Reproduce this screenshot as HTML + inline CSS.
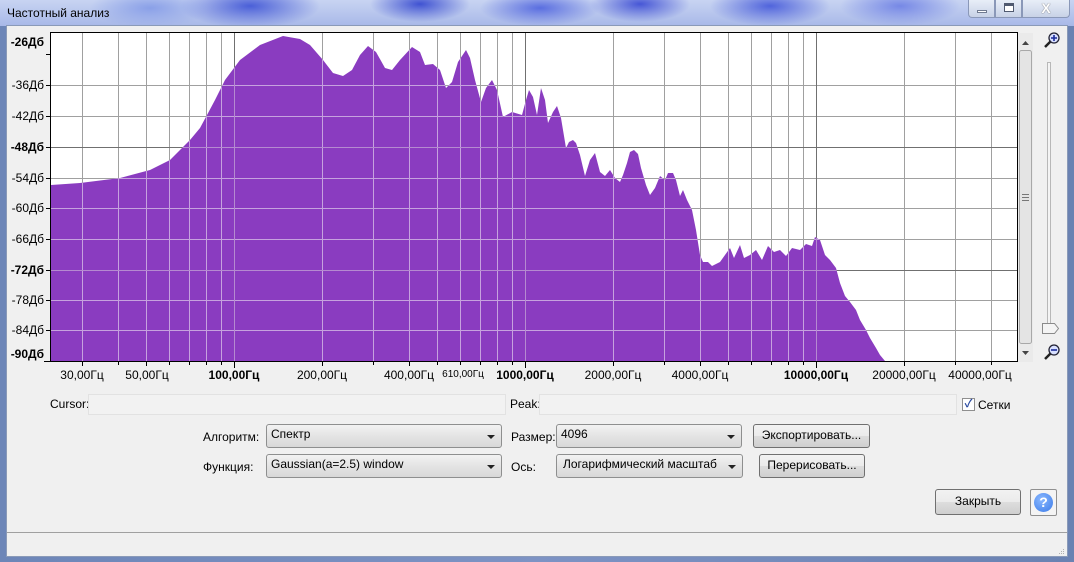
<!DOCTYPE html>
<html><head><meta charset="utf-8">
<style>
*{margin:0;padding:0;box-sizing:border-box}
body{width:1074px;height:562px;overflow:hidden;position:relative;font-family:"Liberation Sans","Noto Sans CJK SC",sans-serif;font-size:12px;color:#000;
background:linear-gradient(90deg,#6d86b8,#7d93c4 50%,#6a82b2)}
.tb{position:absolute;left:0;top:0;width:1074px;height:26px;overflow:hidden;
background:
radial-gradient(ellipse 60px 20px at 150px 8px,#8aa0e8,transparent),
radial-gradient(ellipse 70px 22px at 250px 6px,#4a5fd8,transparent),
radial-gradient(ellipse 50px 18px at 420px 4px,#3f52d2,transparent),
radial-gradient(ellipse 60px 18px at 540px 8px,#5a6ee0,transparent),
radial-gradient(ellipse 50px 18px at 640px 4px,#4656d6,transparent),
radial-gradient(ellipse 60px 20px at 770px 6px,#5064dc,transparent),
radial-gradient(ellipse 60px 20px at 900px 6px,#7688e6,transparent),
linear-gradient(180deg,#c8d4f2,#a8b8e8);}
.title{position:absolute;left:7px;top:6px;font-size:12px;color:#000}
.wb{position:absolute;top:0;height:18px;border:1px solid #8a98b8;border-top:none;background:linear-gradient(#e8eef8,#c8d2e6);}
.client{position:absolute;left:6px;top:25px;width:1062px;height:532px;background:#f0f0f0;border:1px solid #8a9ab8}
.abs{position:absolute;white-space:nowrap}
.ylab{position:absolute;right:1030px;width:50px;text-align:right;font-size:12px}
.xl{position:absolute;top:368px;font-size:12px;transform:translateX(-50%)}
.b{font-weight:bold}
.tx{position:absolute;height:21px;background:#f2f2f2;border:1px solid #e2e2e2}
.combo{position:absolute;height:24px;border:1px solid #8e8f8f;border-radius:3px;background:linear-gradient(#f2f2f2,#e4e4e4 50%,#d8d8d8);padding:2px 4px;font-size:12px}
.combo:after{content:"";position:absolute;right:6px;top:10px;border-left:4px solid transparent;border-right:4px solid transparent;border-top:4px solid #222}
.btn{position:absolute;height:24px;border:1px solid #707070;border-radius:3px;background:linear-gradient(#f2f2f2,#ebebeb 50%,#dddddd 51%,#cfcfcf);text-align:center;line-height:21px;font-size:12px}
</style></head><body>
<div class="tb"><div class="title">Частотный анализ</div>
<div class="wb" style="left:968px;width:27px;border-radius:0 0 0 4px"><div style="position:absolute;left:8px;top:10px;width:10px;height:3px;background:#fff;border:1px solid #707a90"></div></div>
<div class="wb" style="left:995px;width:27px"><div style="position:absolute;left:8px;top:3px;width:10px;height:9px;border:1px solid #505a70;border-top-width:3px;background:#fff"></div></div>
<div class="wb" style="left:1022px;width:48px;border-radius:0 0 4px 0;text-align:center;font-weight:bold;font-size:14px;color:#fff;text-shadow:0 0 1px #333;line-height:17px">X</div>
</div>
<div class="client"></div>

<svg class="abs" style="left:0;top:0" width="1074" height="562" viewBox="0 0 1074 562">
<defs>
<clipPath id="c"><polygon points="51,185 80,183 120,178 150,170 170,160 190,140 200,128 207,115 215,100 225,80 240,60 260,45 283,36 300,39 310,45 323,60 333,73 343,76 352,70 360,55 368,46 376,52 385,68 392,70 400,60 412,47 420,52 425,65 433,64 440,70 446,88 452,82 458,62 466,50 470,58 475,80 481,102 486,88 492,80 497,90 503,117 512,112 522,115 526,100 529,90 533,97 537,115 541,88 545,100 548,123 553,112 557,106 561,118 566,148 569,142 573,140 576,143 580,155 585,176 590,160 595,153 600,172 605,176 610,170 615,178 620,182 623,175 627,163 630,152 634,150 638,154 641,168 646,185 650,195 655,188 660,176 665,180 668,173 673,173 676,180 680,196 683,190 687,200 692,210 696,230 700,255 703,262 708,262 712,266 720,262 730,248 734,258 740,245 744,258 750,255 756,250 762,260 768,246 774,252 780,250 786,256 792,248 800,250 806,244 812,246 815,237 820,240 825,255 830,260 836,268 840,283 845,296 850,302 856,310 860,320 866,330 870,338 876,348 880,355 885,361 51,361"/></clipPath>
<g id="gl">
<path d="M82.5 33V361M118.5 33V361M146.5 33V361M169.5 33V361M189.5 33V361M206.5 33V361M221.5 33V361M322.5 33V361M373.5 33V361M409.5 33V361M437.5 33V361M460.5 33V361M480.5 33V361M497.5 33V361M512.5 33V361M613.5 33V361M664.5 33V361M700.5 33V361M728.5 33V361M751.5 33V361M771.5 33V361M788.5 33V361M803.5 33V361M904.5 33V361M955.5 33V361M991.5 33V361M51 85.5H1017M51 116.5H1017M51 178.5H1017M51 208.5H1017M51 239.5H1017M51 300.5H1017M51 330.5H1017"/>
</g>
<g id="gd">
<path d="M234.5 33V361M525.5 33V361M816.5 33V361M51 147.5H1017M51 270.5H1017"/>
</g>
</defs>
<rect x="51" y="33" width="966" height="328" fill="#fff"/>
<use href="#gl" stroke="#a0a0a0" fill="none"/>
<use href="#gd" stroke="#707070" fill="none"/>
<rect x="51" y="33" width="966" height="328" fill="#8a3cc0" clip-path="url(#c)"/>
<g clip-path="url(#c)" fill="none">
<use href="#gl" stroke="#c6a2de"/>
<use href="#gd" stroke="#b58ad0"/>
</g>
<rect x="50.5" y="32.5" width="967" height="329" fill="none" stroke="#000"/>
<g stroke="#000">
<path d="M46 54.5h4M46 85.5h4M46 116.5h4M46 147.5h4M46 178.5h4M46 208.5h4M46 239.5h4M46 270.5h4M46 300.5h4M46 330.5h4M44 361.5h6"/>
<path d="M82.5 362v4M118.5 362v3M146.5 362v4M169.5 362v3M189.5 362v3M206.5 362v3M221.5 362v3M234.5 362v6M322.5 362v4M373.5 362v3M409.5 362v4M437.5 362v3M460.5 362v3M480.5 362v3M497.5 362v3M512.5 362v3M525.5 362v6M613.5 362v4M664.5 362v3M700.5 362v4M728.5 362v3M751.5 362v3M771.5 362v3M788.5 362v3M803.5 362v3M816.5 362v6M904.5 362v4M955.5 362v3M991.5 362v3"/>
</g>
<rect x="1018" y="33" width="15" height="329" fill="#eaeaea"/>
<polygon points="1022,45 1029,45 1025.5,41" fill="#444"/>
<polygon points="1022,351 1029,351 1025.5,355" fill="#444"/>
<rect x="1019.5" y="50.5" width="12" height="293" rx="2" fill="#e4e4e4" stroke="#a8a8a8"/>
<g stroke="#777"><line x1="1022" y1="194.5" x2="1029" y2="194.5"/><line x1="1022" y1="197.5" x2="1029" y2="197.5"/><line x1="1022" y1="200.5" x2="1029" y2="200.5"/></g>
<rect x="1047.5" y="62.5" width="3" height="264" fill="#f4f4f4" stroke="#b8b8b8"/>
<path d="M1042.5 323.5h12l4 5-4 5h-12z" fill="#f4f4f4" stroke="#8a8a8a"/>
<g>
<line x1="1045" y1="47" x2="1051" y2="41" stroke="#222" stroke-width="2.5"/>
<circle cx="1054" cy="38" r="5" fill="#d8e0ff" stroke="#223" stroke-width="1.3"/>
<path d="M1051 38h6M1054 35v6" stroke="#1a2a9a" stroke-width="1.6"/>
<line x1="1045" y1="359" x2="1051" y2="353" stroke="#222" stroke-width="2.5"/>
<circle cx="1054" cy="350" r="5" fill="#d8e0ff" stroke="#223" stroke-width="1.3"/>
<path d="M1051 350h6" stroke="#1a2a9a" stroke-width="1.6"/>
</g>
<line x1="7" y1="532.5" x2="1067" y2="532.5" stroke="#a0a0a0"/>
<g fill="#b0b0b0"><rect x="1063" y="549" width="1" height="1"/><rect x="1061" y="551" width="1" height="1"/><rect x="1063" y="551" width="1" height="1"/><rect x="1059" y="553" width="1" height="1"/><rect x="1061" y="553" width="1" height="1"/><rect x="1063" y="553" width="1" height="1"/></g>
</svg>

<div class="ylab b" style="top:35px">-26Дб</div>
<div class="ylab" style="top:78px">-36Дб</div>
<div class="ylab" style="top:109px">-42Дб</div>
<div class="ylab b" style="top:140px">-48Дб</div>
<div class="ylab" style="top:171px">-54Дб</div>
<div class="ylab" style="top:201px">-60Дб</div>
<div class="ylab" style="top:232px">-66Дб</div>
<div class="ylab b" style="top:263px">-72Дб</div>
<div class="ylab" style="top:293px">-78Дб</div>
<div class="ylab" style="top:323px">-84Дб</div>
<div class="ylab b" style="top:347px">-90Дб</div>

<div class="xl" style="left:82px">30,00Гц</div>
<div class="xl" style="left:147px">50,00Гц</div>
<div class="xl b" style="left:234px">100,00Гц</div>
<div class="xl" style="left:322px">200,00Гц</div>
<div class="xl" style="left:409px">400,00Гц</div>
<div class="xl" style="left:463px;font-size:10px;top:369px">610,00Гц</div>
<div class="xl b" style="left:525px">1000,00Гц</div>
<div class="xl" style="left:613px">2000,00Гц</div>
<div class="xl" style="left:700px">4000,00Гц</div>
<div class="xl b" style="left:816px">10000,00Гц</div>
<div class="xl" style="left:904px">20000,00Гц</div>
<div class="xl" style="left:980px">40000,00Гц</div>

<div class="abs" style="left:50px;top:397px">Cursor:</div>
<div class="tx" style="left:88px;top:394px;width:418px"></div>
<div class="abs" style="left:510px;top:397px">Peak:</div>
<div class="tx" style="left:539px;top:394px;width:418px"></div>
<div class="abs" style="left:962px;top:398px;width:13px;height:13px;border:1px solid #8f8f8f;background:#fff;color:#2a4aa0;font-size:11px;line-height:11px;text-align:center;font-weight:bold">✓</div>
<div class="abs" style="left:978px;top:398px">Сетки</div>

<div class="abs" style="left:203px;top:430px">Алгоритм:</div>
<div class="combo" style="left:266px;top:424px;width:236px">Спектр</div>
<div class="abs" style="left:203px;top:460px">Функция:</div>
<div class="combo" style="left:266px;top:454px;width:236px">Gaussian(a=2.5) window</div>
<div class="abs" style="left:511px;top:430px">Размер:</div>
<div class="combo" style="left:556px;top:424px;width:186px">4096</div>
<div class="abs" style="left:511px;top:460px">Ось:</div>
<div class="combo" style="left:556px;top:454px;width:187px;padding-left:6px">Логарифмический масштаб</div>
<div class="btn" style="left:753px;top:424px;width:117px">Экспортировать...</div>
<div class="btn" style="left:759px;top:454px;width:106px">Перерисовать...</div>
<div class="btn" style="left:935px;top:489px;width:86px;height:26px;line-height:23px">Закрыть</div>
<div class="abs" style="left:1030px;top:489px;width:27px;height:27px;border:1px solid #909090;border-radius:2px;background:#f4f4f4">
<div style="position:absolute;left:3px;top:3px;width:19px;height:19px;border-radius:50%;background:radial-gradient(circle at 40% 35%,#8ab8ff,#3a7ae8);color:#fff;font-weight:bold;font-size:14px;text-align:center;line-height:19px">?</div></div>
</body></html>
